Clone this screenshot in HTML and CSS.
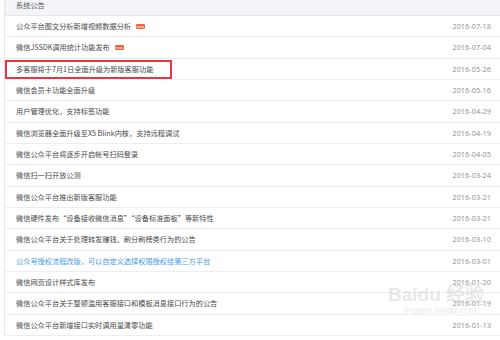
FILE: index.html
```html
<!DOCTYPE html>
<html lang="zh-CN">
<head>
<meta charset="utf-8">
<link rel="stylesheet" href="styles.css">
</head>
<body>
<div class="panel">
  <div class="head">系统公告</div>
  <ul class="list">
    <li class="row"><span class="title">公众平台图文分析新增视频数据分析<span class="new">new</span></span><span class="date">2016-07-18</span></li>
    <li class="row"><span class="title">微信JSSDK调用统计功能发布<span class="new">new</span></span><span class="date">2016-07-04</span></li>
    <li class="row marked"><span class="title">多客服将于7月1日全面升级为新版客服功能</span><span class="date">2016-05-26</span><span class="mark"></span></li>
    <li class="row"><span class="title">微信会员卡功能全面升级</span><span class="date">2016-05-16</span></li>
    <li class="row"><span class="title">用户管理优化，支持标签功能</span><span class="date">2016-04-29</span></li>
    <li class="row"><span class="title">微信浏览器全面升级至X5 Blink内核，支持远程调试</span><span class="date">2016-04-19</span></li>
    <li class="row"><span class="title">微信公众平台将逐步开启帐号扫码登录</span><span class="date">2016-04-05</span></li>
    <li class="row"><span class="title">微信扫一扫开放公测</span><span class="date">2016-03-24</span></li>
    <li class="row"><span class="title">微信公众平台推出新版客服功能</span><span class="date">2016-03-21</span></li>
    <li class="row"><span class="title">微信硬件发布“设备接收微信消息”“设备标准面板”等新特性</span><span class="date">2016-03-21</span></li>
    <li class="row"><span class="title">微信公众平台关于处理转发赚钱、刷分刷榜类行为的公告</span><span class="date">2016-03-10</span></li>
    <li class="row"><span class="title link">公众号授权流程改版，可以自定义选择权限授权给第三方平台</span><span class="date">2016-03-01</span></li>
    <li class="row"><span class="title">微信网页设计样式库发布</span><span class="date">2016-01-20</span></li>
    <li class="row"><span class="title">微信公众平台关于整顿滥用客服接口和模板消息接口行为的公告</span><span class="date">2016-01-19</span></li>
    <li class="row"><span class="title">微信公众平台新增接口实时调用量清零功能</span><span class="date">2016-01-13</span></li>
  </ul>
  <div class="watermark"><span class="wm-big">Baidu 经验</span><span class="wm-small">jingyan.baidu.com</span></div>
</div>
</body>
</html>
```

FILE: styles.css
```css
html, body {
  margin: 0;
  padding: 0;
  background: #ffffff;
}
body {
  font-family: "Noto Sans CJK SC", "Noto Sans", sans-serif;
  font-size: 7.2px;
  color: #4a4a4a;
  overflow: hidden;
}
.panel {
  position: relative;
  margin-left: 4px;
  border-left: 1px solid #e4e6eb;
  margin-top: -5px;
}
.head {
  height: 21px;
  line-height: 21px;
  padding-left: 11px;
  background: #f4f5f9;
  color: #555;
  border-bottom: 1px solid #e7e7eb;
  box-sizing: border-box;
}
.list {
  list-style: none;
  margin: 0;
  padding: 0;
}
.row {
  position: relative;
  display: flex;
  align-items: center;
  justify-content: space-between;
  height: 21.33px;
  padding: 0 9px 0 11px;
  border-bottom: 1px solid #eceef1;
  box-sizing: border-box;
}
.title {
  display: flex;
  align-items: center;
  color: #4a4a4a;
}
.title.link {
  color: #459ae9;
}
.new {
  display: inline-block;
  margin-left: 5px;
  width: 9px;
  height: 5px;
  line-height: 5px;
  background: #f4633a;
  color: #fff;
  font-size: 4px;
  text-align: center;
  border-radius: 1px;
  font-family: "Liberation Sans", sans-serif;
}
.date {
  color: #8f8f8f;
  font-family: "Open Sans", "Noto Sans", sans-serif;
  font-size: 7.4px;
}
.mark {
  position: absolute;
  left: 0;
  top: 1px;
  width: 167px;
  height: 19px;
  border: 2px solid #e8363f;
  box-sizing: border-box;
}
.watermark {
  position: absolute;
  left: 383px;
  top: 290px;
  display: flex;
  flex-direction: column;
  color: rgba(190, 190, 190, 0.35);
  font-family: "Liberation Sans", sans-serif;
  pointer-events: none;
}
.wm-big {
  font-size: 19px;
  font-weight: bold;
  line-height: 20px;
}
.wm-small {
  font-size: 9px;
  line-height: 10px;
  margin-left: 16px;
}
```
